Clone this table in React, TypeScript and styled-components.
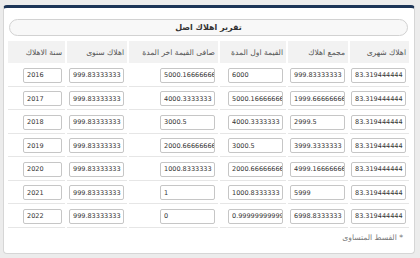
import React from "react"
import styled, { createGlobalStyle } from "styled-components"

const GlobalStyle = createGlobalStyle`
	html, body {
		margin: 0;
		padding: 0;
		background: #ececec;
	}
	* {
		box-sizing: border-box;
	}
`

const Page = styled.div`
	padding: 5px 5px 0 3px;
	font-family: "DejaVu Sans", sans-serif;
`

const Panel = styled.div`
	direction: rtl;
	width: 412px;
	background: #ffffff;
	border: 1px solid #d6d6d6;
	border-top: 3px solid #1d3557;
	border-radius: 4px;
	padding: 11px 5px 11px 5px;
`

const Title = styled.div`
	margin: 0 1px 5px 0;
	height: 17px;
	border: 1px solid #d2d2d2;
	border-radius: 9px;
	background: #f8f8f8;
	display: flex;
	align-items: center;
	justify-content: center;
	font-size: 8px;
	font-weight: bold;
	color: #333;
`

const Table = styled.table`
	width: 401px;
	table-layout: fixed;
	border-collapse: separate;
	border-spacing: 2px 0;
	margin: 0 -2px 0 0;
`

const HeadCell = styled.th`
	height: 22px;
	background: #f2f2f2;
	color: #555;
	font-size: 7.6px;
	font-weight: normal;
	text-align: right;
	padding: 0 3px 0 0;
	white-space: nowrap;
`

const Row = styled.tr`
	height: 23.5px;
`

const Cell = styled.td`
	border-bottom: 1px solid #e6e6e6;
	text-align: right;
	padding: 2px 3px 0 0;
	vertical-align: middle;
`

const Field = styled.input<{ $narrow?: boolean }>`
	direction: ltr;
	display: block;
	margin-left: auto;
	margin-right: 0;
	width: ${(p) => (p.$narrow ? "39px" : "55px")};
	height: 15px;
	border: 1px solid #c6c6c6;
	border-radius: 2px;
	padding: 0 0 0 3px;
	font-family: "DejaVu Sans", sans-serif;
	font-size: 6.5px;
	color: #333;
	background: #fff;
	outline: none;
`

const Note = styled.div`
	margin-top: 5px;
	padding-right: 6px;
	font-size: 7.6px;
	color: #777;
`

const headers = [
	{ title: "اهلاك شهرى", width: 59 },
	{ title: "مجمع اهلاك", width: 60 },
	{ title: "القيمة اول المدة", width: 66 },
	{ title: "صافى القيمة اخر المدة", width: 89 },
	{ title: "اهلاك سنوى", width: 60 },
	{ title: "سنة الاهلاك", width: 57 },
]

const rows = [
	["83.319444444", "999.83333333", "6000", "5000.1666666667", "999.83333333", "2016"],
	["83.319444444", "1999.6666666667", "5000.1666666667", "4000.3333333", "999.83333333", "2017"],
	["83.319444444", "2999.5", "4000.3333333", "3000.5", "999.83333333", "2018"],
	["83.319444444", "3999.3333333", "3000.5", "2000.6666666667", "999.83333333", "2019"],
	["83.319444444", "4999.1666666667", "2000.6666666667", "1000.8333333", "999.83333333", "2020"],
	["83.319444444", "5999", "1000.8333333", "1", "999.83333333", "2021"],
	["83.319444444", "6998.8333333", "0.99999999999909", "0", "999.83333333", "2022"],
]

export default function App() {
	return (
		<Page>
			<GlobalStyle />
			<Panel>
				<Title>تقرير اهلاك اصل</Title>
				<Table>
					<colgroup>
						{headers.map((h) => (
							<col key={h.title} style={{ width: h.width }} />
						))}
					</colgroup>
					<thead>
						<tr>
							{headers.map((h) => (
								<HeadCell key={h.title}>{h.title}</HeadCell>
							))}
						</tr>
					</thead>
					<tbody>
						{rows.map((r, i) => (
							<Row key={i}>
								{r.map((v, j) => (
									<Cell key={j}>
										<Field readOnly value={v} $narrow={j === 5} />
									</Cell>
								))}
							</Row>
						))}
					</tbody>
				</Table>
				<Note>* القسط المتساوى</Note>
			</Panel>
		</Page>
	)
}
